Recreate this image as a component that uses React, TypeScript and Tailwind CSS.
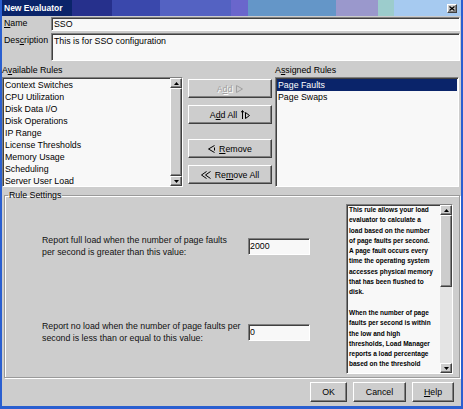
import React from "react";

const raised =
  "border border-t-white border-l-white border-r-[#404040] border-b-[#404040] shadow-[inset_-1px_-1px_0_#808080]";
const sunken =
  "border border-t-[#808080] border-l-[#808080] border-r-white border-b-white shadow-[inset_1px_1px_0_#404040]";

const available = [
  "Context Switches",
  "CPU Utilization",
  "Disk Data I/O",
  "Disk Operations",
  "IP Range",
  "License Thresholds",
  "Memory Usage",
  "Scheduling",
  "Server User Load",
];

function Arrow({ dir }: { dir: "up" | "down" }) {
  return (
    <div className={`flex h-[10px] shrink-0 items-center justify-center bg-[#cdcdcd] ${raised}`}>
      <svg width="5" height="3" viewBox="0 0 5 3">
        <path d={dir === "up" ? "M0 3h5L2.5 0z" : "M0 0h5L2.5 3z"} fill="#000" />
      </svg>
    </div>
  );
}

function ScrollBar({ thumb }: { thumb: string }) {
  return (
    <div className="flex w-[12px] shrink-0 flex-col bg-[#e4e4e4]">
      <Arrow dir="up" />
      <div className="flex flex-1 flex-col">
        <div className={`${thumb} bg-[#cdcdcd] ${raised}`} />
      </div>
      <Arrow dir="down" />
    </div>
  );
}

function Btn({
  className,
  children,
  disabled,
}: {
  className?: string;
  children: React.ReactNode;
  disabled?: boolean;
}) {
  return (
    <div
      className={`flex h-[19px] items-center justify-center gap-[4px] bg-[#cdcdcd] ${raised} ${
        disabled ? "text-[#a0a0a0] [text-shadow:1px_1px_0_#fff]" : ""
      } ${className ?? ""}`}
    >
      {children}
    </div>
  );
}

export default function App() {
  return (
    <div className="flex h-[409px] w-[463px] flex-col border-x-2 border-b-[3px] border-[#2a5fd0] bg-[#cdcdcd] font-['Liberation_Sans',Arial,sans-serif] text-[8.8px] leading-[12px] text-black">
      {/* title bar */}
      <div className="flex h-[16px] shrink-0 items-center justify-between bg-[linear-gradient(90deg,#0a246a_0_70px,#26308c_70px_110px,#3a48ac_110px_158px,#5462c2_158px_229px,#6a66cc_229px_246px,#6496c8_246px_334px,#9a98cc_334px_376px,#9ccccc_376px_392px,#a6caf0_392px)] pl-[2px] pr-[4px]">
        <span className="text-[8.5px] font-bold text-white">New Evaluator</span>
        <div className={`flex h-[9px] w-[10px] items-center justify-center bg-[#cdcdcd] ${raised}`}>
          <svg width="6" height="5" viewBox="0 0 6 5">
            <path d="M0.5 0.5l5 4M5.5 0.5l-5 4" stroke="#000" strokeWidth="1.3" />
          </svg>
        </div>
      </div>

      {/* name */}
      <div className="mt-[1px] flex h-[14px] shrink-0">
        <div className="w-[49px] pl-[2px] leading-[13px]">
          <u>N</u>ame
        </div>
        <div className={`mr-[1px] flex-1 bg-[#f8f8f8] pl-[2px] leading-[12px] ${sunken}`}>SSO</div>
      </div>

      {/* description */}
      <div className="mt-[2px] flex h-[28px] shrink-0">
        <div className="w-[49px] pl-[2px] leading-[14px]">
          Des<u>c</u>ription
        </div>
        <div className={`mr-[1px] flex-1 bg-[#f8f8f8] pl-[2px] pt-[1px] leading-[12px] ${sunken}`}>
          This is for SSO configuration
        </div>
      </div>

      {/* list labels */}
      <div className="flex h-[16px] shrink-0 items-end pb-[1px]">
        <div className="w-[181px]">
          A<u>v</u>ailable Rules
        </div>
        <div className="ml-[92px]">
          A<u>s</u>signed Rules
        </div>
      </div>

      {/* lists */}
      <div className="flex h-[110px] shrink-0">
        <div className={`flex w-[181px] bg-[#f8f8f8] ${sunken}`}>
          <div className="flex-1 pl-[2px] pt-[1px]">
            {available.map((r) => (
              <div key={r} className="h-[12px] leading-[12px]">
                {r}
              </div>
            ))}
          </div>
          <ScrollBar thumb="flex-1" />
        </div>

        <div className="ml-[5px] flex w-[84px] flex-col">
          <Btn disabled className="mt-[2px]">
            <span>
              A<u>d</u>d
            </span>
            <svg width="7" height="8" viewBox="0 0 7 8">
              <path d="M0.5 0.5L6.5 4L0.5 7.5Z" fill="none" stroke="#a0a0a0" />
            </svg>
          </Btn>
          <Btn className="mt-[7px]">
            <span>
              A<u>d</u>d All
            </span>
            <svg width="9" height="9" viewBox="0 0 9 9">
              <path d="M1.5 1v8M0 2.5l1.5-2 1.5 2" stroke="#000" fill="none" />
              <path d="M4.5 2.5l4 3-4 3z" fill="none" stroke="#000" />
            </svg>
          </Btn>
          <Btn className="mt-[15px]">
            <svg width="7" height="8" viewBox="0 0 7 8">
              <path d="M6.5 0.5L0.5 4L6.5 7.5" fill="none" stroke="#000" />
              <path d="M6.5 2.5v3" stroke="#000" />
            </svg>
            <span>
              <u>R</u>emove
            </span>
          </Btn>
          <Btn className="mt-[7px]">
            <svg width="10" height="8" viewBox="0 0 10 8">
              <path d="M5.5 0.5L0.5 4L5.5 7.5M9.5 0.5L4.5 4L9.5 7.5" fill="none" stroke="#000" />
            </svg>
            <span>
              Re<u>m</u>ove All
            </span>
          </Btn>
        </div>

        <div className={`ml-[3px] w-[184px] bg-[#f8f8f8] pt-[1px] ${sunken}`}>
          <div className="mx-[1px] h-[12px] bg-[#0a246a] pl-[1px] leading-[12px] text-white">Page Faults</div>
          <div className="h-[12px] pl-[2px] leading-[12px]">Page Swaps</div>
        </div>
      </div>

      {/* rule settings */}
      <fieldset className="mt-[2px] ml-[2px] mr-[1px] shrink-0 border border-[#9a9a9a] shadow-[inset_1px_1px_0_#fff,1px_1px_0_#fff]">
        <legend className="ml-[3px] px-[1px] leading-[12px]">Rule Settings</legend>
        <div className="flex h-[176px]">
          <div className="flex w-[341px] flex-col">
            <div className="mt-[33px] flex h-[24px] items-center">
              <div className="w-[243px] pl-[37px] leading-[12px] text-[#111]">
                Report full load when the number of page faults
                <br />
                per second is greater than this value:
              </div>
              <div className={`h-[17px] w-[62px] bg-[#f8f8f8] pl-[1px] leading-[15px] ${sunken}`}>2000</div>
            </div>
            <div className="mt-[62px] flex h-[24px] items-center">
              <div className="w-[243px] pl-[37px] leading-[12px] text-[#111]">
                Report no load when the number of page faults per
                <br />
                second is less than or equal to this value:
              </div>
              <div className={`h-[17px] w-[62px] bg-[#f8f8f8] pl-[1px] leading-[15px] ${sunken}`}>0</div>
            </div>
          </div>

          <div className={`mt-[3px] flex h-[170px] w-[107px] bg-[#f8f8f8] ${sunken}`}>
            <div className="flex-1 overflow-hidden whitespace-nowrap pl-[2px] text-[6.5px] font-bold leading-[10.3px]">
              This rule allows your load
              <br />
              evaluator to calculate a
              <br />
              load based on the number
              <br />
              of page faults per second.
              <br />
              A page fault occurs every
              <br />
              time the operating system
              <br />
              accesses physical memory
              <br />
              that has been flushed to
              <br />
              disk.
              <br />
              <br />
              When the number of page
              <br />
              faults per second is within
              <br />
              the low and high
              <br />
              thresholds, Load Manager
              <br />
              reports a load percentage
              <br />
              based on the threshold
            </div>
            <ScrollBar thumb="h-[72px]" />
          </div>
        </div>
      </fieldset>

      {/* dialog buttons */}
      <div className="mt-[4px] flex h-[20px] shrink-0 justify-end pr-[7px]">
        <Btn className="h-[20px] w-[37px]">OK</Btn>
        <Btn className="ml-[6px] h-[20px] w-[53px]">Cancel</Btn>
        <Btn className="ml-[6px] h-[20px] w-[42px]">
          <span>
            <u>H</u>elp
          </span>
        </Btn>
      </div>
    </div>
  );
}
